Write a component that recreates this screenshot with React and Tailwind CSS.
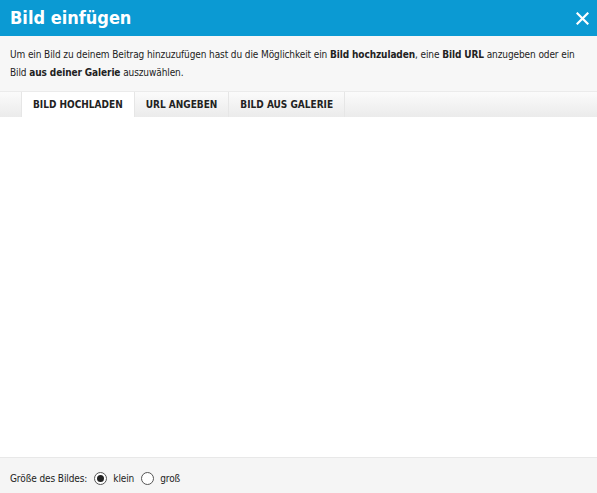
import { useState } from 'react';

const tabs = ['BILD HOCHLADEN', 'URL ANGEBEN', 'BILD AUS GALERIE'];

const Radio = ({ checked, label, onClick }) => (
    <label className="inline-flex items-center cursor-pointer" onClick={onClick}>
        <span className="w-[13px] h-[13px] rounded-full border border-[#555] bg-white flex items-center justify-center">
            {checked && <span className="w-[7px] h-[7px] rounded-full bg-[#222]" />}
        </span>
        <span className="ml-[6px]">{label}</span>
    </label>
);

export default function App() {
    const [activeTab, setActiveTab] = useState(0);
    const [size, setSize] = useState('klein');

    return (
        <div className="w-[597px] h-[493px] flex flex-col bg-white text-[#222] font-['DejaVu_Sans_Condensed','DejaVu_Sans',sans-serif]">
            {/* Header */}
            <div className="h-[36px] shrink-0 bg-[#0b9ad3] flex items-center justify-between pl-[10px] pr-[6px]">
                <h1 className="text-white font-bold text-[18px] leading-none">Bild einfügen</h1>
                <button className="text-white p-[2px]">
                    <svg width="13" height="13" viewBox="0 0 13 13" stroke="currentColor" strokeWidth="2.2" strokeLinecap="square">
                        <path d="M1.5 1.5 L11.5 11.5 M11.5 1.5 L1.5 11.5" />
                    </svg>
                </button>
            </div>

            {/* Intro */}
            <p className="bg-[#f7f7f7] px-[10px] pt-[10px] pb-[9px] text-[10px] leading-[18px] tracking-[-0.1px]">
                Um ein Bild zu deinem Beitrag hinzuzufügen hast du die Möglichkeit ein <b>Bild hochzuladen</b>, eine <b>Bild URL</b> anzugeben oder ein Bild <b>aus deiner Galerie</b> auszuwählen.
            </p>

            {/* Tabs */}
            <div className="h-[26px] shrink-0 flex pl-[21px] border-t border-[#ebebeb] bg-gradient-to-b from-[#fbfbfb] to-[#ebebeb]">
                {tabs.map((tab, i) => (
                    <button
                        key={tab}
                        onClick={() => setActiveTab(i)}
                        className={`h-full px-[11px] text-[10px] font-bold border-r border-[#e6e6e6] ${activeTab === i ? 'bg-white border-l' : ''}`}
                    >
                        {tab}
                    </button>
                ))}
            </div>

            {/* Content */}
            <div className="flex-1 bg-white" />

            {/* Footer */}
            <div className="h-[36px] shrink-0 bg-[#f5f5f5] border-t border-[#e8e8e8] flex items-center pl-[10px] pt-[5px] text-[10px] gap-[7px] tracking-[-0.1px]">
                <span>Größe des Bildes:</span>
                <Radio checked={size === 'klein'} label="klein" onClick={() => setSize('klein')} />
                <Radio checked={size === 'groß'} label="groß" onClick={() => setSize('groß')} />
            </div>
        </div>
    );
}
